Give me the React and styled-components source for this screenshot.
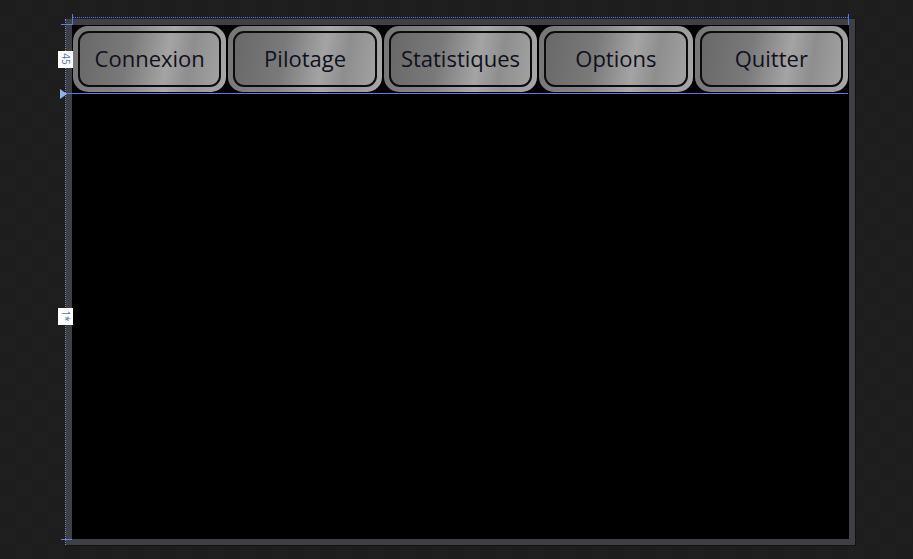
import React from 'react';
import styled, { createGlobalStyle } from 'styled-components';

const buttons = ['Connexion', 'Pilotage', 'Statistiques', 'Options', 'Quitter'];

function App() {
  return (
    <>
      <GlobalStyle />
      <Canvas>
        <Ruler>
          <span />
          <SizeLabel><span>45</span></SizeLabel>
          <SizeLabel><span>1*</span></SizeLabel>
          <span />
        </Ruler>
        <Window>
          <ButtonRow>
            {buttons.map((label) => (
              <Cell key={label}>
                <Ring>
                  <Face>{label}</Face>
                </Ring>
              </Cell>
            ))}
          </ButtonRow>
          <Body />
        </Window>

        {/* designer adorners drawn over the window */}
        <TopDotted />
        <Tick left={72} />
        <Tick left={848} />
        <Stub top={24} />
        <Stub top={539} />
        <RowLine />
        <Arrow />
      </Canvas>
    </>
  );
}

export default App;

const GlobalStyle = createGlobalStyle`
  html, body {
    margin: 0;
    padding: 0;
    background: #1e1e1e;
  }
`;

const Canvas = styled.div`
  position: relative;
  width: 913px;
  height: 559px;
  box-sizing: border-box;
  padding: 19px 0 0 58px;
  display: flex;
  align-items: flex-start;
  overflow: hidden;
  background-color: #1e1e1e;
  background-image: repeating-conic-gradient(#1f1f1f 0 25%, #1d1d1d 0 50%);
  background-size: 32px 32px;
`;

const Ruler = styled.div`
  width: 7px;
  height: 526px;
  border-right: 1px dotted #7b8fc0;
  display: grid;
  grid-template-rows: 6px 68px 1fr 6px;
  position: relative;
  z-index: 2;
`;

const SizeLabel = styled.div`
  align-self: center;
  width: 15px;
  height: 17px;
  background: #fff;
  display: flex;
  align-items: center;
  justify-content: center;

  span {
    display: block;
    transform: rotate(90deg);
    font-family: 'Open Sans', 'Noto Sans', sans-serif;
    font-size: 10px;
    line-height: 10px;
    color: #4a6fc8;
  }
`;

const Window = styled.div`
  width: 789px;
  height: 526px;
  box-sizing: border-box;
  border: 6px solid #3f3f46;
  box-shadow: 1px 1px 0 #121212;
  background: #000;
  display: flex;
  flex-direction: column;
`;

const ButtonRow = styled.div`
  height: 68px;
  display: grid;
  grid-template-columns: repeat(5, 1fr);
`;

const Cell = styled.div`
  padding: 1px;
  display: flex;
`;

const Ring = styled.div`
  flex: 1;
  border-radius: 15px;
  padding: 5px;
  background: linear-gradient(100deg, #767676 0%, #858585 35%, #a9a9a9 62%, #959595 78%, #a8a8a8 100%);
  display: flex;
`;

const Face = styled.div`
  flex: 1;
  border: 2px solid #0c0c0c;
  border-radius: 11px;
  background: linear-gradient(100deg, #686868 0%, #7a7a7a 35%, #a4a4a4 62%, #8e8e8e 78%, #a2a2a2 100%);
  display: flex;
  align-items: center;
  justify-content: center;
  font-family: 'Open Sans', 'Noto Sans', sans-serif;
  font-size: 22px;
  color: #10101c;
  padding-bottom: 2px;
`;

const Body = styled.div`
  flex: 1;
  background: #000;
`;

const TopDotted = styled.div`
  position: absolute;
  left: 72px;
  top: 17px;
  width: 776px;
  border-top: 1px dotted #4d7ce6;
`;

const Tick = styled.div`
  position: absolute;
  left: ${(p) => p.left}px;
  top: 14px;
  width: 1px;
  height: 11px;
  background: #4d7ce6;
`;

const Stub = styled.div`
  position: absolute;
  left: 61px;
  top: ${(p) => p.top}px;
  width: 11px;
  height: 1px;
  background: #5b86e0;
  z-index: 3;
`;

const RowLine = styled.div`
  position: absolute;
  left: 62px;
  top: 93px;
  width: 786px;
  height: 1px;
  background: #4a7ee8;
  z-index: 3;
`;

const Arrow = styled.div`
  position: absolute;
  left: 60px;
  top: 89px;
  width: 0;
  height: 0;
  border-top: 5px solid transparent;
  border-bottom: 5px solid transparent;
  border-left: 7px solid #8fb2f5;
  z-index: 3;
`;
